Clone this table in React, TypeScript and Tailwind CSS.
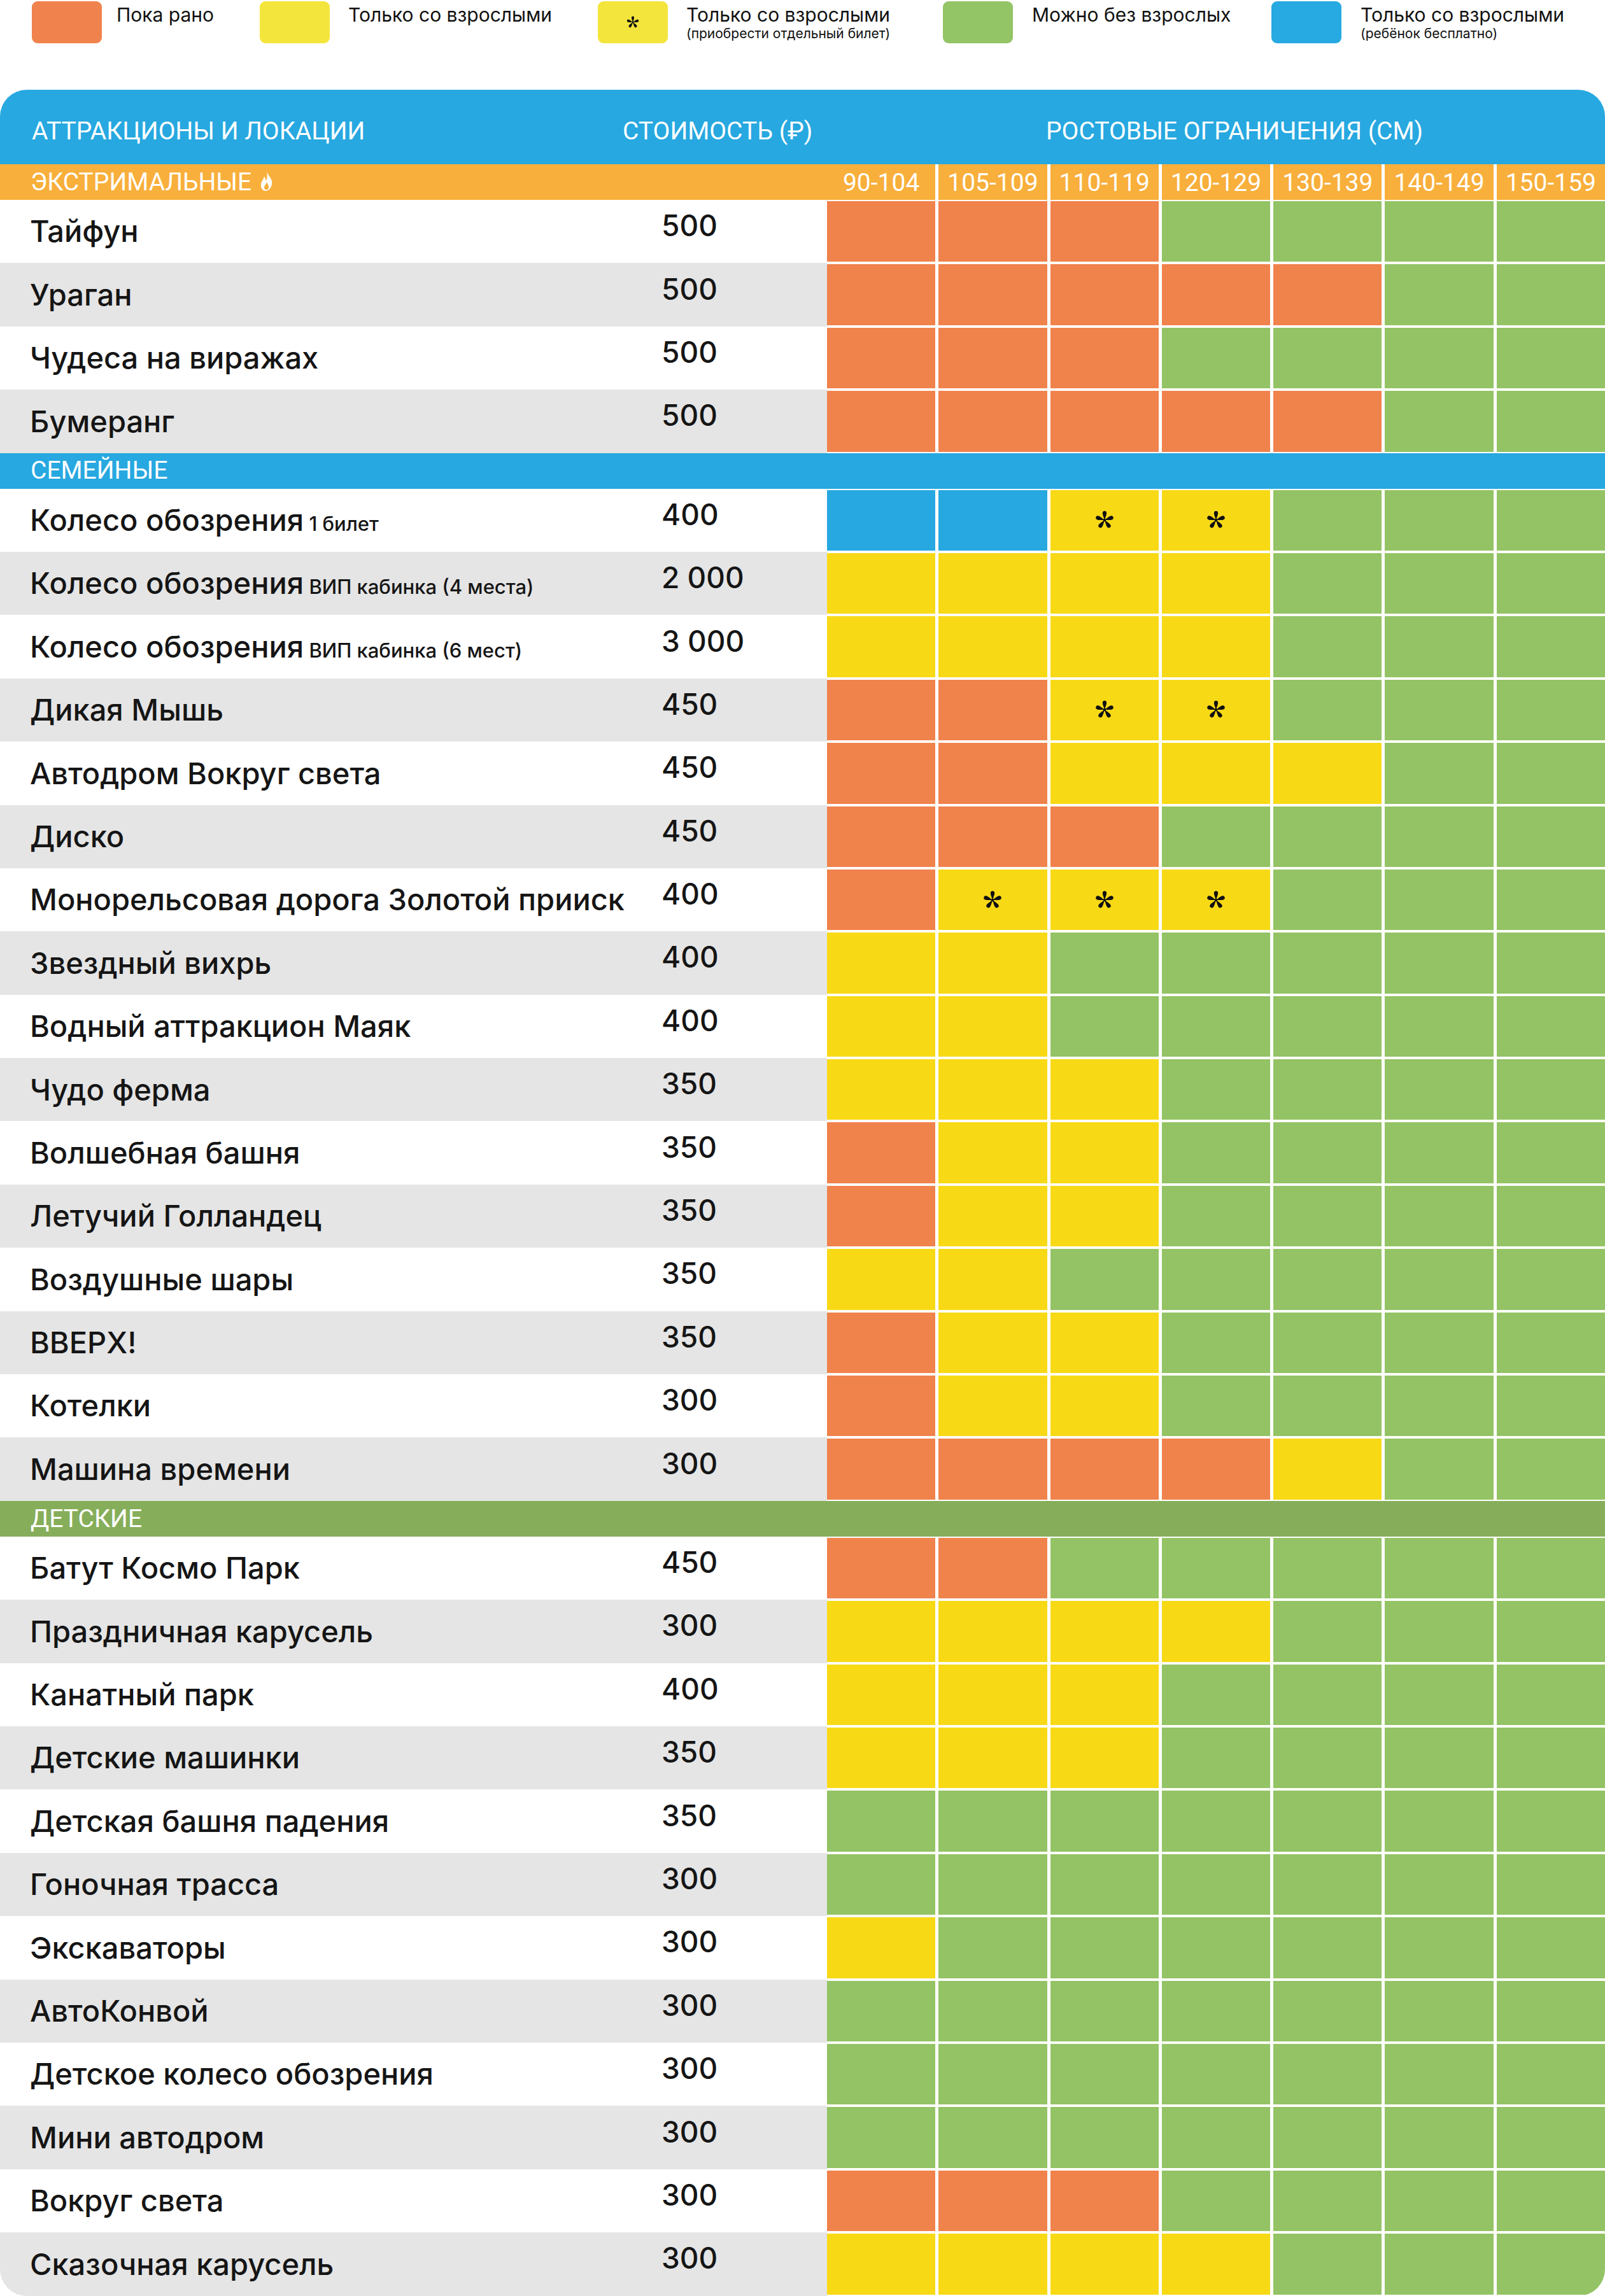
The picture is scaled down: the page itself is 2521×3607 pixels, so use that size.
type Cell = "O" | "Y" | "S" | "G" | "B";

interface Row {
  name: string;
  note?: string;
  price: string;
  cells: string;
}

interface Section {
  title: string;
  bar: string;
  flame?: boolean;
  rows: Row[];
}

const heights = ["90-104", "105-109", "110-119", "120-129", "130-139", "140-149", "150-159"];

const cellColor: Record<Cell, string> = {
  O: "bg-[#F0824C]",
  Y: "bg-[#F8D916]",
  S: "bg-[#F8D916]",
  G: "bg-[#93C364]",
  B: "bg-[#27A8E0]",
};

const sections: Section[] = [
  {
    title: "ЭКСТРИМАЛЬНЫЕ",
    bar: "bg-[#F8AF3B]",
    flame: true,
    rows: [
      { name: "Тайфун", price: "500", cells: "OOOGGGG" },
      { name: "Ураган", price: "500", cells: "OOOOOGG" },
      { name: "Чудеса на виражах", price: "500", cells: "OOOGGGG" },
      { name: "Бумеранг", price: "500", cells: "OOOOOGG" },
    ],
  },
  {
    title: "СЕМЕЙНЫЕ",
    bar: "bg-[#27A8E0]",
    rows: [
      { name: "Колесо обозрения", note: "1 билет", price: "400", cells: "BBSSGGG" },
      { name: "Колесо обозрения", note: "ВИП кабинка (4 места)", price: "2 000", cells: "YYYYGGG" },
      { name: "Колесо обозрения", note: "ВИП кабинка (6 мест)", price: "3 000", cells: "YYYYGGG" },
      { name: "Дикая Мышь", price: "450", cells: "OOSSGGG" },
      { name: "Автодром Вокруг света", price: "450", cells: "OOYYYGG" },
      { name: "Диско", price: "450", cells: "OOOGGGG" },
      { name: "Монорельсовая дорога Золотой прииск", price: "400", cells: "OSSSGGG" },
      { name: "Звездный вихрь", price: "400", cells: "YYGGGGG" },
      { name: "Водный аттракцион Маяк", price: "400", cells: "YYGGGGG" },
      { name: "Чудо ферма", price: "350", cells: "YYYGGGG" },
      { name: "Волшебная башня", price: "350", cells: "OYYGGGG" },
      { name: "Летучий Голландец", price: "350", cells: "OYYGGGG" },
      { name: "Воздушные шары", price: "350", cells: "YYGGGGG" },
      { name: "ВВЕРХ!", price: "350", cells: "OYYGGGG" },
      { name: "Котелки", price: "300", cells: "OYYGGGG" },
      { name: "Машина времени", price: "300", cells: "OOOOYGG" },
    ],
  },
  {
    title: "ДЕТСКИЕ",
    bar: "bg-[#86AE5A]",
    rows: [
      { name: "Батут Космо Парк", price: "450", cells: "OOGGGGG" },
      { name: "Праздничная карусель", price: "300", cells: "YYYYGGG" },
      { name: "Канатный парк", price: "400", cells: "YYYGGGG" },
      { name: "Детские машинки", price: "350", cells: "YYYGGGG" },
      { name: "Детская башня падения", price: "350", cells: "GGGGGGG" },
      { name: "Гоночная трасса", price: "300", cells: "GGGGGGG" },
      { name: "Экскаваторы", price: "300", cells: "YGGGGGG" },
      { name: "АвтоКонвой", price: "300", cells: "GGGGGGG" },
      { name: "Детское колесо обозрения", price: "300", cells: "GGGGGGG" },
      { name: "Мини автодром", price: "300", cells: "GGGGGGG" },
      { name: "Вокруг света", price: "300", cells: "OOOGGGG" },
      { name: "Сказочная карусель", price: "300", cells: "YYYYGGG" },
    ],
  },
];

function Star({ size = 30 }: { size?: number }) {
  const arm = "M0,0 C-0.8,-3 -3.4,-8.5 -3.1,-11.2 A3.1,3.1 0 0 1 3.1,-11.2 C3.4,-8.5 0.8,-3 0,0 Z";
  return (
    <svg width={size} height={size} viewBox="-15 -15 30 30">
      {[0, 72, 144, 216, 288].map((a) => (
        <path key={a} d={arm} fill="#111" transform={`rotate(${a})`} />
      ))}
      <circle r="2.2" fill="#111" />
    </svg>
  );
}

function Flame() {
  return (
    <svg width="24" height="33" viewBox="0 0 24 33" className="ml-[12px] mb-[4px]">
      <path
        d="M12 1 C13 7 19 10 20 17 C21 24 17 31 11 32 C5 32 2 27 3 21 C4 16 7 14 8 9 C10 12 10 15 11 16 C13 12 13 6 12 1 Z"
        fill="#fff"
      />
      <path
        d="M11.5 18 C13 21 16 23 15 27 C14.5 29.5 12 30.5 10.5 30 C8 29.5 7.5 26.5 8.5 24 C9.5 22 11.5 21 11.5 18 Z"
        fill="#F8AF3B"
      />
    </svg>
  );
}

function Legend() {
  return (
    <div className="h-[141px] flex items-start pl-[50px] pt-[2px] text-[#111]">
      <div className="w-[358px] flex gap-[23px]">
        <div className="w-[110px] h-[66px] rounded-[9px] bg-[#F0834D]" />
        <div className="text-[30px] leading-[35px] pt-[4px]">Пока рано</div>
      </div>
      <div className="w-[531px] flex gap-[29px]">
        <div className="w-[110px] h-[66px] rounded-[9px] bg-[#F4E53D]" />
        <div className="text-[30px] leading-[35px] pt-[4px]">Только со взрослыми</div>
      </div>
      <div className="w-[542px] flex gap-[29px]">
        <div className="w-[110px] h-[66px] rounded-[9px] bg-[#F4E53D] flex items-center justify-center">
          <Star size={20} />
        </div>
        <div className="pt-[4px]">
          <div className="text-[30px] leading-[35px]">Только со взрослыми</div>
          <div className="text-[21px] leading-[24px]">(приобрести отдельный билет)</div>
        </div>
      </div>
      <div className="w-[516px] flex gap-[30px]">
        <div className="w-[110px] h-[66px] rounded-[9px] bg-[#93C466]" />
        <div className="text-[30px] leading-[35px] pt-[4px]">Можно без взрослых</div>
      </div>
      <div className="flex gap-[30px]">
        <div className="w-[110px] h-[66px] rounded-[9px] bg-[#27A9E1]" />
        <div className="pt-[4px]">
          <div className="text-[30px] leading-[35px]">Только со взрослыми</div>
          <div className="text-[21px] leading-[24px]">(ребёнок бесплатно)</div>
        </div>
      </div>
    </div>
  );
}

function DataRow({ row, gray }: { row: Row; gray: boolean }) {
  return (
    <div className="flex h-[99.4px]">
      <div className={`w-[1299px] flex items-center ${gray ? "bg-[#E5E5E5]" : "bg-white"}`}>
        <div className="w-[1039px] pl-[47px] text-[47px] font-medium text-[#151515] whitespace-nowrap">
          {row.name}
          {row.note && <span className="text-[31px]"> {row.note}</span>}
        </div>
        <div className="text-[46px] font-medium text-[#151515] pb-[18px]">{row.price}</div>
      </div>
      <div className="flex-1 grid grid-cols-7 gap-x-[5px] py-[2px] bg-white">
        {row.cells.split("").map((c, i) => (
          <div key={i} className={`${cellColor[c as Cell]} flex items-center justify-center`}>
            {c === "S" && <Star size={30} />}
          </div>
        ))}
      </div>
    </div>
  );
}

export default function App() {
  return (
    <div className="w-[2521px] h-[3607px] bg-white font-['Inter','Noto_Sans',sans-serif] overflow-hidden">
      <Legend />
      <div className="rounded-[42px] overflow-hidden">
        <div className="flex h-[117px] items-center bg-[#27A8E0] text-white text-[39px] font-['Roboto',sans-serif] pt-[14px] whitespace-nowrap">
          <div className="w-[978px] pl-[50px]">АТТРАКЦИОНЫ И ЛОКАЦИИ</div>
          <div className="w-[321px]">СТОИМОСТЬ (₽)</div>
          <div className="flex-1 pl-[344px]">РОСТОВЫЕ ОГРАНИЧЕНИЯ (СМ)</div>
        </div>
        {sections.map((s, si) => (
          <div key={s.title}>
            {si === 0 ? (
              <div className="flex h-[56px] bg-[#F8AF3B] text-white text-[39px] font-['Roboto',sans-serif]">
                <div className="w-[1299px] pl-[48px] flex items-center">
                  {s.title}
                  {s.flame && <Flame />}
                </div>
                <div className="flex-1 grid grid-cols-7 gap-x-[5px] bg-white">
                  {heights.map((h) => (
                    <div key={h} className="bg-[#F8AF3B] flex items-center justify-center">
                      {h}
                    </div>
                  ))}
                </div>
              </div>
            ) : (
              <div
                className={`h-[56px] ${s.bar} text-white text-[39px] font-['Roboto',sans-serif] pl-[48px] flex items-center`}
              >
                {s.title}
              </div>
            )}
            {s.rows.map((r, ri) => (
              <DataRow key={ri} row={r} gray={ri % 2 === 1} />
            ))}
          </div>
        ))}
      </div>
    </div>
  );
}
